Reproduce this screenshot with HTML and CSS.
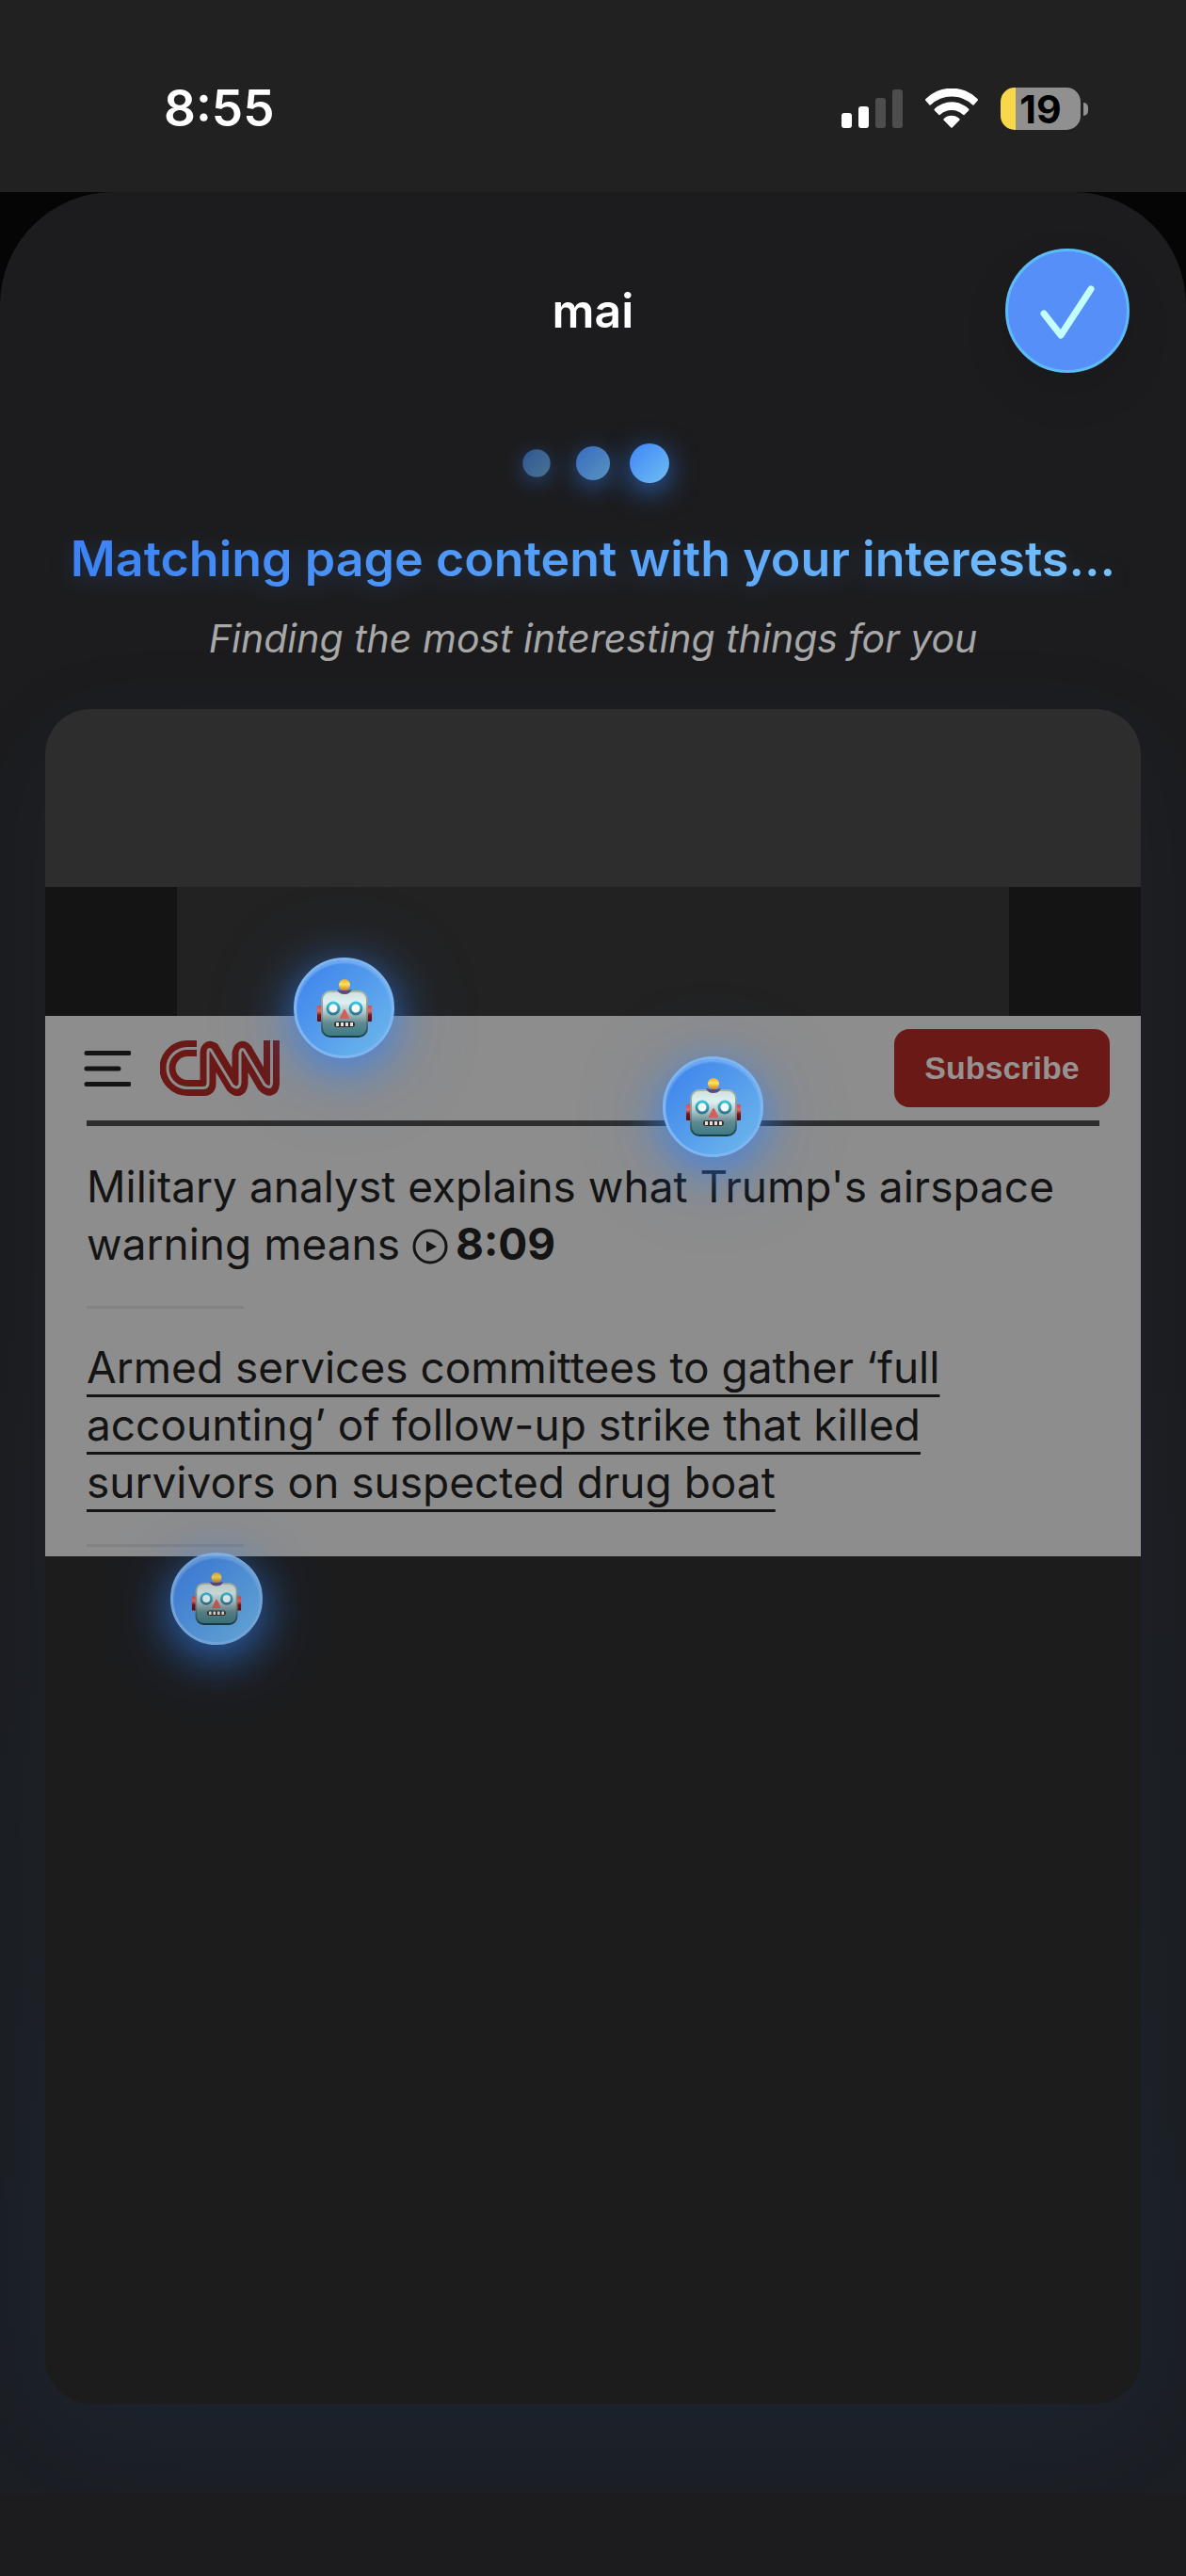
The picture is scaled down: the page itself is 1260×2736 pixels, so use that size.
FILE: index.html
```html
<!DOCTYPE html>
<html lang="en">
<head>
  <meta charset="UTF-8">
  <meta name="viewport" content="width=device-width, initial-scale=1.0">
  <title>mai</title>
  <link rel="stylesheet" href="styles.css">
</head>
<body>

<!-- Shared robot face -->
<svg class="defs" aria-hidden="true">
  <defs>
    <linearGradient id="face" x1="0" y1="0" x2="0" y2="1">
      <stop offset="0" stop-color="#cfe0de"/>
      <stop offset="0.25" stop-color="#def0f0"/>
      <stop offset="0.45" stop-color="#b5c8ca"/>
      <stop offset="0.7" stop-color="#5f8a91"/>
      <stop offset="1" stop-color="#3a7985"/>
    </linearGradient>
    <linearGradient id="edge" x1="0" y1="0" x2="0" y2="1">
      <stop offset="0" stop-color="#a8b4a8"/>
      <stop offset="0.5" stop-color="#7f9494"/>
      <stop offset="1" stop-color="#173c47"/>
    </linearGradient>
    <linearGradient id="ear" x1="0" y1="0" x2="0" y2="1">
      <stop offset="0" stop-color="#e04848"/>
      <stop offset="0.35" stop-color="#e86a66"/>
      <stop offset="0.6" stop-color="#7c1519"/>
      <stop offset="1" stop-color="#5d0d14"/>
    </linearGradient>
    <linearGradient id="ball" x1="0" y1="0" x2="0" y2="1">
      <stop offset="0" stop-color="#f0a92e"/>
      <stop offset="0.45" stop-color="#fbe25c"/>
      <stop offset="1" stop-color="#d97f1c"/>
    </linearGradient>
    <linearGradient id="eye" x1="0" y1="0" x2="0" y2="1">
      <stop offset="0" stop-color="#3cc4dc"/>
      <stop offset="1" stop-color="#2f7791"/>
    </linearGradient>
    <symbol id="robot" viewBox="0 0 60 62">
      <rect x="1" y="28" width="6" height="17" rx="1" fill="url(#ear)"/>
      <rect x="53" y="28" width="6" height="17" rx="1" fill="url(#ear)"/>
      <circle cx="30" cy="6" r="6" fill="url(#ball)"/>
      <rect x="6" y="13" width="48" height="48" rx="9" fill="url(#face)" stroke="url(#edge)" stroke-width="2"/>
      <path d="M22 11 Q30 13 38 11 Q36 16 30 16 Q24 16 22 11 Z" fill="#5d4b80"/>
      <circle cx="18" cy="31" r="6" fill="#f2fafa" stroke="url(#eye)" stroke-width="3"/>
      <circle cx="42" cy="31" r="6" fill="#f2fafa" stroke="url(#eye)" stroke-width="3"/>
      <path d="M30 33 L34 41 H26 Z" fill="#d0605c" stroke="#d0605c" stroke-width="2" stroke-linejoin="round"/>
      <rect x="19" y="45" width="22" height="6" rx="3" fill="#32302f"/>
      <path d="M21 46 h3 v4 h-3 z M26 46 h3 v4 h-3 z M31 46 h3 v4 h-3 z M36 46 h3 v4 h-3 z" fill="#e6e2d8"/>
    </symbol>
  </defs>
</svg>

<header class="status-bar">
  <div class="time">8:55</div>
  <div class="status-icons">
    <svg class="signal" viewBox="0 0 65 42" aria-hidden="true">
      <rect x="0" y="26" width="11" height="16" rx="3" fill="#fff"/>
      <rect x="18" y="19" width="11" height="23" rx="3" fill="#fff"/>
      <rect x="36" y="10" width="11" height="32" rx="3" fill="#4d4d4d"/>
      <rect x="54" y="1" width="11" height="41" rx="3" fill="#4d4d4d"/>
    </svg>
    <svg class="wifi" viewBox="0 0 58 42" aria-hidden="true">
      <path d="M1.500 13 Q0.500 12 1.500 11 A39 39 0 0 1 56.500 11 Q57.500 12 56.500 13 L52.500 17.500 Q52 18 51 17.200 A32 32 0 0 0 7 17.200 Q6 18 5.500 17.500 Z" fill="#fff"/>
      <path d="M11 23.500 Q10 22.500 11 21.500 A26 26 0 0 1 47 21.500 Q48 22.500 47 23.500 L42.500 28 Q42 28.500 41 27.700 A18 18 0 0 0 17 27.700 Q16 28.500 15.500 28 Z" fill="#fff"/>
      <path d="M20.500 33.500 Q20 32.800 20.800 32 A12 12 0 0 1 37.200 32 Q38 32.800 37.500 33.500 L29.700 41.500 Q29 42 28.300 41.500 Z" fill="#fff"/>
    </svg>
    <div class="battery"><span>19</span></div>
  </div>
</header>

<main class="sheet">
  <div class="title-bar">
    <h1>mai</h1>
    <button class="done" aria-label="Done">
      <svg viewBox="0 0 132 132" aria-hidden="true">
        <path d="M41 69 L59 92 L91 43" />
      </svg>
    </button>
  </div>

  <section class="loading">
    <div class="dots">
      <span class="dot small"></span>
      <span class="dot medium"></span>
      <span class="dot"></span>
    </div>
    <h2>Matching page content with your interests...</h2>
    <p class="hint">Finding the most interesting things for you</p>

    <div class="preview">
      <div class="preview-top"></div>
      <div class="ad-slot"><div class="ad"></div></div>

      <article class="site">
        <div class="site-nav">
          <button class="menu" aria-label="Menu">
            <svg viewBox="0 0 50 38" aria-hidden="true">
              <path d="M3 2.500 H48 M3 19 H37 M3 35.500 H48" />
            </svg>
          </button>
          <svg class="logo" viewBox="0 0 127 59" role="img" aria-label="CNN">
            <path class="logo-body" d="M39 8.500 H29 A21 21 0 0 0 29 50.500 H47 Q51 50.500 51 46 V14 Q51 8 55 10 L78 48 Q84 54 85 46 V14 Q86 7 90 11 L111 47 Q118 54 118.500 46 V0" />
            <path class="logo-line" d="M39 8.500 H29 A21 21 0 0 0 29 50.500 H46 Q51 50.500 51 45 V13 Q51 8 54 10 L77 48 Q84 53 85 45 V13 Q86 8 89 10 L111 47 Q118 53 118.500 45 V0" />
          </svg>
          <button class="subscribe">Subscribe</button>
        </div>

        <div class="stories">
          <p>Military analyst explains what Trump's airspace<br>warning means
            <svg class="play" viewBox="0 0 38 38" aria-hidden="true">
              <circle cx="19" cy="19" r="17" />
              <path d="M15 13 L26 19 L15 25 Z" />
            </svg><b>8:09</b>
          </p>
          <hr>
          <p><a href="#">Armed services committees to gather ‘full<br>accounting’ of follow-up strike that killed<br>survivors on suspected drug boat</a></p>
          <hr>
        </div>
      </article>

      <!-- Robots float over the page preview -->
      <div class="bot bot-1"><svg><use href="#robot"/></svg></div>
      <div class="bot bot-2"><svg><use href="#robot"/></svg></div>
      <div class="bot bot-3"><svg><use href="#robot"/></svg></div>
    </div>
  </section>
</main>

</body>
</html>
```
FILE: styles.css
```css
* {
  box-sizing: border-box;
}

body {
  margin: 0;
  min-height: 100vh;
  display: flex;
  flex-direction: column;
  font-family: Inter, "Liberation Sans", sans-serif;
  background-color: #050505;
  color: white;
}

h1, h2, p {
  margin: 0;
}

button {
  padding: 0;
  border: none;
  background: none;
  cursor: pointer;
}

svg {
  display: block;
}

.defs {
  position: absolute;
  width: 0;
  height: 0;
}

/* Status bar */
.status-bar {
  display: flex;
  justify-content: space-between;
  align-items: center;
  height: 204px;
  padding: 26px 104px 0 174px;
  background-color: #212121;
}

.time {
  font-size: 53px;
  font-weight: 600;
}

.status-icons {
  display: flex;
  align-items: center;
  gap: 23px;
}

.signal {
  width: 65px;
  height: 42px;
}

.wifi {
  width: 58px;
  height: 42px;
}

.battery {
  position: relative;
  width: 85px;
  height: 45px;
  margin-right: 8px;
  border-radius: 15px;
  background: linear-gradient(to right, #f8d74a 16px, #909090 16px);
  color: black;
  font-size: 41px;
  font-weight: 700;
  line-height: 46px;
  text-align: center;
}

.battery::after {
  content: "";
  position: absolute;
  right: -8px;
  top: 16px;
  width: 5px;
  height: 14px;
  border-radius: 0 5px 5px 0;
  background-color: #909090;
}

/* Sheet */
.sheet {
  flex: 1;
  display: flex;
  flex-direction: column;
  padding-bottom: 87px;
  border-radius: 120px 120px 0 0;
  background-color: #1c1c1e;
}

.title-bar {
  display: grid;
  grid-template-columns: 1fr auto 1fr;
  align-items: center;
  padding: 60px 60px 0;
}

.title-bar h1 {
  grid-column: 2;
  font-size: 50px;
  font-weight: 600;
}

.done {
  justify-self: end;
  width: 132px;
  height: 132px;
  border: 3px solid #5cbcfa;
  border-radius: 50%;
  background-color: #578ff8;
  box-shadow: 0 20px 50px rgba(0, 0, 0, 0.1);
}

.done svg {
  margin: -3px;
}

.done path {
  fill: none;
  stroke: #c4ffff;
  stroke-width: 7;
  stroke-linecap: round;
  stroke-linejoin: round;
}

/* Loading state */
.loading {
  flex: 1;
  display: flex;
  flex-direction: column;
  align-items: center;
  padding: 75px 48px 96px;
  overflow: hidden;
  background: linear-gradient(to bottom, transparent 40%, rgba(26, 40, 54, 0.25) 90%);
}

.dots {
  display: flex;
  gap: 18px;
}

.dot {
  width: 42px;
  height: 42px;
  border-radius: 50%;
  background: linear-gradient(135deg, #3f86f7, #70bdf3);
  box-shadow: 0 8px 30px rgba(50, 130, 246, 0.7);
}

.dot.medium {
  transform: scale(0.86);
  opacity: 0.75;
}

.dot.small {
  transform: scale(0.7);
  opacity: 0.55;
}

.loading h2 {
  margin-top: 49px;
  font-size: 52px;
  font-weight: 600;
  line-height: 64px;
  white-space: nowrap;
  color: transparent;
  background: linear-gradient(to right, #3b82f6, #74c0fb);
  background-clip: text;
  filter: drop-shadow(0 6px 12px rgba(59, 130, 246, 0.2));
}

.hint {
  margin-top: 27px;
  font-size: 41px;
  font-style: italic;
  line-height: 50px;
  color: #a8a8a8;
}

.preview {
  position: relative;
  flex: 1;
  width: 100%;
  margin-top: 50px;
  border-radius: 48px;
  background-color: #1c1c1d;
  box-shadow: 0 30px 120px rgba(36, 100, 190, 0.07);
}

.preview-top {
  height: 189px;
  border-radius: 48px 48px 0 0;
  background-color: #2d2d2d;
}

.ad-slot {
  display: flex;
  justify-content: center;
  height: 137px;
  background-color: #141414;
}

.ad {
  width: 76%;
  background-color: #222222;
}

/* Dimmed web page */
.site {
  padding: 14px 44px 10px;
  background-color: #8d8d8d;
  color: #141414;
}

.site-nav {
  display: flex;
  align-items: center;
  margin: 0 -11px 0 -3px;
}

.menu svg {
  width: 50px;
  height: 38px;
}

.menu path {
  fill: none;
  stroke: #141414;
  stroke-width: 5;
  stroke-linecap: round;
}

.logo {
  width: 127px;
  height: 59px;
  margin-left: 31px;
}

.logo path {
  fill: none;
}

.logo-body {
  stroke: #6b1916;
  stroke-width: 17;
}

.logo-line {
  stroke: #8d8d8d;
  stroke-width: 3;
}

.subscribe {
  margin-left: auto;
  width: 229px;
  height: 83px;
  border-radius: 16px;
  background-color: #6b1916;
  color: #969292;
  font-family: "Liberation Sans", Arial, sans-serif;
  font-size: 34px;
  font-weight: 700;
}

.stories {
  margin-top: 14px;
  border-top: 6px solid #2e2e2e;
}

.stories p {
  margin-top: 34px;
  font-size: 46px;
  line-height: 61px;
}

.stories hr + p {
  margin-top: 32px;
}

.stories a {
  color: inherit;
  text-decoration: underline;
  text-decoration-thickness: 3px;
  text-decoration-skip-ink: none;
  text-underline-offset: 12px;
}

.stories hr {
  width: 167px;
  height: 3px;
  margin: 35px 0 0;
  border: none;
  background-color: #828282;
}

.play {
  display: inline-block;
  width: 38px;
  height: 38px;
  margin-right: 8px;
  vertical-align: -5px;
}

.play circle {
  fill: none;
  stroke: #141414;
  stroke-width: 3;
}

.play path {
  fill: #141414;
}

/* Robots */
.bot {
  position: absolute;
  display: flex;
  justify-content: center;
  align-items: center;
  width: 107px;
  height: 107px;
  border: 3px solid #7db6f2;
  border-radius: 50%;
  background: linear-gradient(135deg, #3b80ec, #6fb9ec);
  box-shadow: 0 12px 48px rgba(50, 130, 246, 0.8), 0 12px 110px rgba(50, 130, 246, 0.2), inset 0 3px 2px rgba(140, 190, 245, 0.6);
}

.bot svg {
  width: 60px;
  height: 62px;
}

.bot-1 {
  left: 264px;
  top: 264px;
}

.bot-2 {
  left: 656px;
  top: 369px;
}

.bot-3 {
  left: 133px;
  top: 896px;
  width: 98px;
  height: 98px;
  opacity: 0.88;
}

.bot-3 svg {
  width: 54px;
  height: 56px;
}
```
